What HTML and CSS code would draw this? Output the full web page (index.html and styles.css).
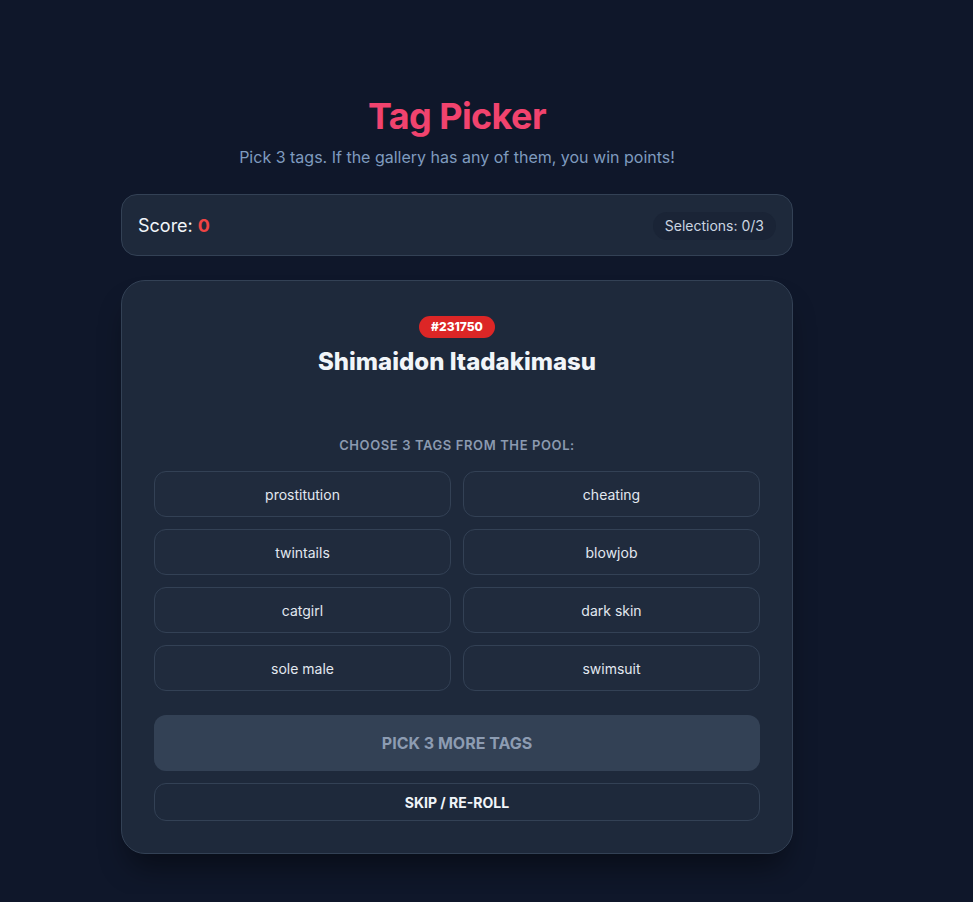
FILE: index.html
```html
<!DOCTYPE html>
<html lang="en">
<head>
<meta charset="utf-8">
<title>Tag Picker</title>
<link rel="stylesheet" href="styles.css">
</head>
<body>
<div class="page">
  <main class="wrap">
    <header class="head">
      <h1 class="title">Tag Picker</h1>
      <p class="subtitle">Pick 3 tags. If the gallery has any of them, you win points!</p>
    </header>

    <section class="scorebar">
      <div class="score">Score: <span class="score-num">0</span></div>
      <div class="pill">Selections: 0/3</div>
    </section>

    <section class="card">
      <div class="gallery">
        <span class="badge">#231750</span>
        <h2 class="gname">Shimaidon Itadakimasu</h2>
      </div>

      <p class="label">Choose 3 tags from the pool:</p>

      <div class="tags">
        <button class="tag">prostitution</button>
        <button class="tag">cheating</button>
        <button class="tag">twintails</button>
        <button class="tag">blowjob</button>
        <button class="tag">catgirl</button>
        <button class="tag">dark skin</button>
        <button class="tag">sole male</button>
        <button class="tag">swimsuit</button>
      </div>

      <button class="submit">Pick 3 more tags</button>
      <button class="skip">Skip / Re-roll</button>
    </section>
  </main>
</div>
</body>
</html>
```

FILE: styles.css
```css
* { box-sizing: border-box; }

html, body {
  margin: 0;
  padding: 0;
  background: #0f172a;
  min-height: 100%;
}

body {
  font-family: Inter, "Noto Sans", "Liberation Sans", sans-serif;
  color: #e2e8f0;
}

.page {
  width: 914px;
  padding-top: 96px;
  padding-bottom: 40px;
}

.wrap {
  width: 672px;
  margin: 0 auto;
}

.head {
  text-align: center;
  margin-bottom: 25px;
}

.title {
  margin: 0 0 9px;
  font-size: 36px;
  line-height: 40px;
  font-weight: 700;
  color: #f1436e;
  letter-spacing: -0.6px;
}

.subtitle {
  margin: 0;
  font-size: 16px;
  line-height: 24px;
  color: #7f9bbf;
}

.scorebar {
  display: flex;
  align-items: center;
  justify-content: space-between;
  background: #1e293b;
  border: 1px solid #334155;
  border-radius: 16px;
  padding: 17px 16px 15px;
  margin-bottom: 24px;
}

.score {
  font-size: 18px;
  line-height: 28px;
  color: #f1f5f9;
}

.score-num {
  color: #ef4444;
  font-weight: 700;
}

.pill {
  background: #1a2436;
  border-radius: 999px;
  padding: 4px 12px;
  font-size: 14px;
  line-height: 20px;
  color: #cbd5e1;
}

.card {
  background: #1e293b;
  border: 1px solid #334155;
  border-radius: 24px;
  padding: 32px;
  box-shadow: 0 20px 30px -8px rgba(0, 0, 0, 0.45);
}

.gallery {
  display: flex;
  flex-direction: column;
  align-items: center;
  padding-top: 3px;
  margin-bottom: 58px;
}

.badge {
  background: #dc2626;
  color: #fff;
  font-size: 12px;
  line-height: 16px;
  font-weight: 800;
  padding: 3px 12px;
  border-radius: 999px;
}

.gname {
  margin: 9px 0 0;
  font-size: 24px;
  line-height: 30px;
  font-weight: 800;
  color: #f1f5f9;
  text-align: center;
}

.label {
  margin: 0 0 16px;
  text-align: center;
  font-size: 13px;
  line-height: 20px;
  font-weight: 600;
  text-transform: uppercase;
  letter-spacing: 0.6px;
  color: #8b9ab0;
}

.tags {
  display: grid;
  grid-template-columns: 1fr 1fr;
  gap: 12px;
  margin-bottom: 24px;
}

.tag {
  font-family: inherit;
  height: 46px;
  background: #202b3d;
  border: 1px solid #334155;
  border-radius: 12px;
  color: #e2e8f0;
  font-size: 14px;
  font-weight: 400;
  cursor: pointer;
}

.submit {
  display: block;
  width: 100%;
  height: 56px;
  border: none;
  border-radius: 12px;
  background: #334155;
  color: #8d9cb2;
  font-family: inherit;
  font-size: 16px;
  font-weight: 700;
  text-transform: uppercase;
  margin-bottom: 12px;
}

.skip {
  display: block;
  width: 100%;
  height: 38px;
  border: 1px solid #334155;
  border-radius: 12px;
  background: #1e293b;
  color: #f1f5f9;
  font-family: inherit;
  font-size: 14px;
  font-weight: 700;
  text-transform: uppercase;
}
```
